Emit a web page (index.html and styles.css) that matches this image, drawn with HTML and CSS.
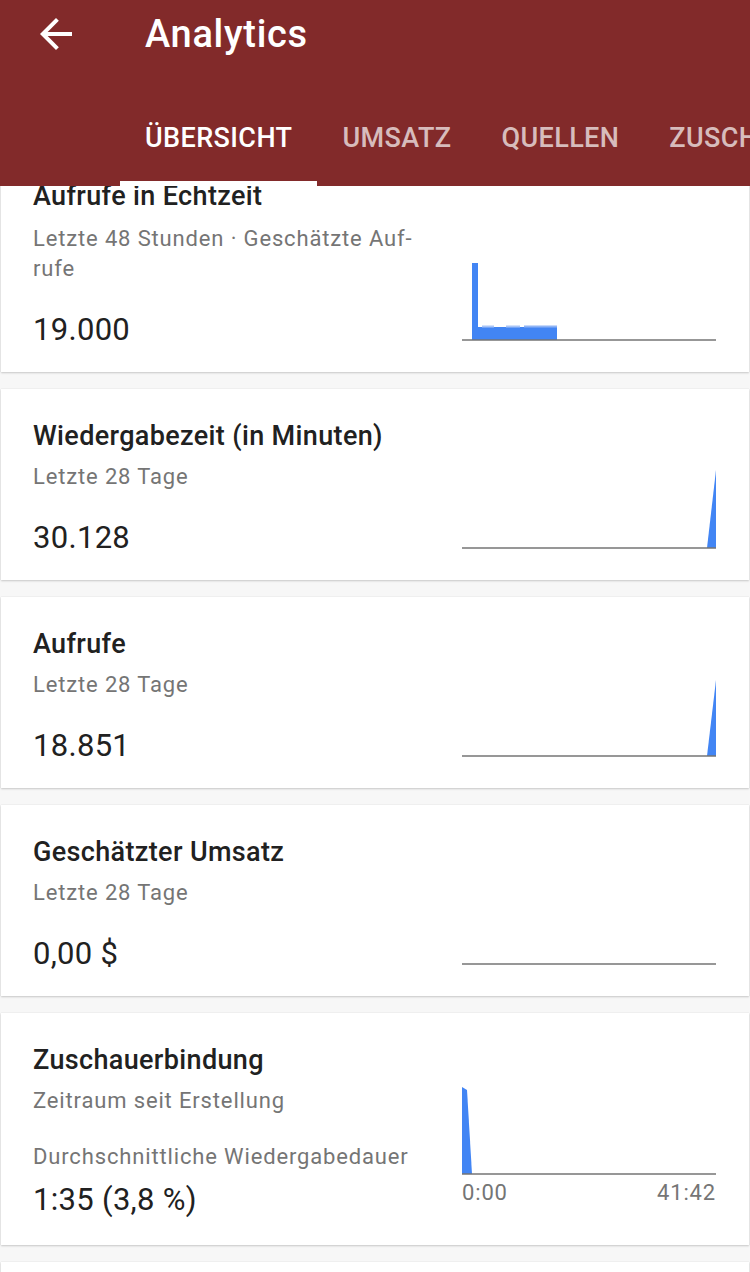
FILE: index.html
```html
<!DOCTYPE html>
<html lang="de">
<head>
<meta charset="utf-8">
<title>Analytics</title>
<link rel="stylesheet" href="styles.css">
</head>
<body>
<div class="app">
  <header class="header">
    <div class="topbar">
      <svg class="back" viewBox="0 0 24 24" width="48" height="48"><path fill="#fff" d="M20 11H7.83l5.59-5.59L12 4l-8 8 8 8 1.41-1.41L7.83 13H20v-2z"/></svg>
      <h1 class="title">Analytics</h1>
    </div>
    <nav class="tabs">
      <div class="tab active">ÜBERSICHT</div>
      <div class="tab">UMSATZ</div>
      <div class="tab">QUELLEN</div>
      <div class="tab">ZUSCHAUER</div>
    </nav>
  </header>
  <main class="content">
    <section class="card first">
      <div class="info">
        <div class="card-title">Aufrufe in Echtzeit</div>
        <div class="card-sub">Letzte 48 Stunden · Geschätzte Auf-<br>rufe</div>
        <div class="card-value">19.000</div>
      </div>
      <div class="chart">
        <svg width="254" height="80" viewBox="0 0 254 80">
          <rect x="10" y="2" width="6" height="77" fill="#4285f4"/>
          <rect x="16" y="66" width="79" height="13" fill="#4285f4"/>
          <rect x="20" y="64.5" width="12" height="2" fill="#a9c5f7"/>
          <rect x="44" y="64.5" width="14" height="2" fill="#a9c5f7"/>
          <rect x="62" y="64.5" width="33" height="2" fill="#8fb4f5"/>
          <line x1="0" y1="79" x2="254" y2="79" stroke="#757575" stroke-width="1.5"/>
        </svg>
      </div>
    </section>
    <section class="card">
      <div class="info">
        <div class="card-title">Wiedergabezeit (in Minuten)</div>
        <div class="card-sub">Letzte 28 Tage</div>
        <div class="card-value">30.128</div>
      </div>
      <div class="chart">
        <svg width="254" height="80" viewBox="0 0 254 80">
          <polygon points="245,79 254,1 254,79" fill="#4285f4"/>
          <line x1="0" y1="79" x2="254" y2="79" stroke="#757575" stroke-width="1.5"/>
        </svg>
      </div>
    </section>
    <section class="card">
      <div class="info">
        <div class="card-title">Aufrufe</div>
        <div class="card-sub">Letzte 28 Tage</div>
        <div class="card-value">18.851</div>
      </div>
      <div class="chart">
        <svg width="254" height="80" viewBox="0 0 254 80">
          <polygon points="245,79 254,3 254,79" fill="#4285f4"/>
          <line x1="0" y1="79" x2="254" y2="79" stroke="#757575" stroke-width="1.5"/>
        </svg>
      </div>
    </section>
    <section class="card">
      <div class="info">
        <div class="card-title">Geschätzter Umsatz</div>
        <div class="card-sub">Letzte 28 Tage</div>
        <div class="card-value">0,00 $</div>
      </div>
      <div class="chart">
        <svg width="254" height="80" viewBox="0 0 254 80">
          <line x1="0" y1="79" x2="254" y2="79" stroke="#757575" stroke-width="1.5"/>
        </svg>
      </div>
    </section>
    <section class="card">
      <div class="info">
        <div class="card-title">Zuschauerbindung</div>
        <div class="card-sub">Zeitraum seit Erstellung</div>
        <div class="card-label">Durchschnittliche Wiedergabedauer</div>
        <div class="card-value tight">1:35 (3,8 %)</div>
      </div>
      <div class="chart retention">
        <svg width="254" height="90" viewBox="0 0 254 90">
          <polygon points="0,89 0,2 5,5 10,89" fill="#4285f4"/>
          <line x1="0" y1="89" x2="254" y2="89" stroke="#757575" stroke-width="1.5"/>
        </svg>
        <div class="axis"><span>0:00</span><span>41:42</span></div>
      </div>
    </section>
    <section class="card empty"></section>
  </main>
</div>
</body>
</html>
```

FILE: styles.css
```css
* { box-sizing: border-box; margin: 0; padding: 0; }
html, body { width: 750px; height: 1272px; overflow: hidden; }
body {
  background: #f7f7f7;
  font-family: Roboto, "Liberation Sans", Arial, sans-serif;
  color: #212121;
}
.app { width: 750px; height: 1272px; overflow: hidden; }
.header {
  position: relative;
  z-index: 2;
  background: #822a2a;
  height: 186px;
}
.topbar {
  height: 68px;
  display: flex;
  align-items: center;
  padding-left: 32px;
}
.back { display: block; flex: none; }
.title {
  margin-left: 65px;
  color: #fff;
  font-size: 38px;
  font-weight: 500;
  letter-spacing: 0.7px;
}
.tabs {
  margin-top: 22px;
  height: 96px;
  display: flex;
  padding-left: 120px;
  white-space: nowrap;
  overflow: hidden;
}
.tab {
  display: flex;
  align-items: center;
  padding: 0 25px;
  font-size: 27px;
  font-weight: 500;
  letter-spacing: 0.4px;
  color: rgba(255, 255, 255, 0.7);
  flex: none;
}
.tab.active {
  color: #fff;
  box-shadow: inset 0 -5px 0 #fff;
}
.content {
  margin-top: -37px;
  position: relative;
  z-index: 1;
}
.card {
  background: #fff;
  margin: 0 1px 17px 1px;
  box-shadow: 0 1px 2px rgba(0, 0, 0, 0.18), 0 0 1px rgba(0, 0, 0, 0.12);
  display: flex;
  align-items: flex-end;
  padding: 31px 33px 22px 32px;
}
.card.first .card-sub { margin-top: 12px; }
.card.empty { height: 60px; }
.info { flex: 1; min-width: 0; }
.card-title {
  font-size: 27px;
  font-weight: 500;
  letter-spacing: 0.35px;
  line-height: 32px;
  color: #212121;
}
.card-sub {
  margin-top: 10px;
  font-size: 22px;
  letter-spacing: 0.85px;
  line-height: 30px;
  color: #757575;
  white-space: nowrap;
}
.card-label {
  margin-top: 26px;
  font-size: 22px;
  letter-spacing: 0.85px;
  line-height: 30px;
  color: #757575;
  white-space: nowrap;
}
.card-value {
  margin-top: 26px;
  font-size: 31px;
  letter-spacing: 0.3px;
  line-height: 40px;
  color: #212121;
}
.card-value.tight { margin-top: 8px; margin-bottom: 3px; }
.chart {
  flex: none;
  width: 254px;
  margin-bottom: 9px;
}
.chart svg { display: block; }
.chart.retention { margin-bottom: 17px; }
.axis {
  margin-top: 5px;
  display: flex;
  justify-content: space-between;
  font-size: 22px;
  letter-spacing: 0.85px;
  line-height: 26px;
  color: #757575;
}
```
